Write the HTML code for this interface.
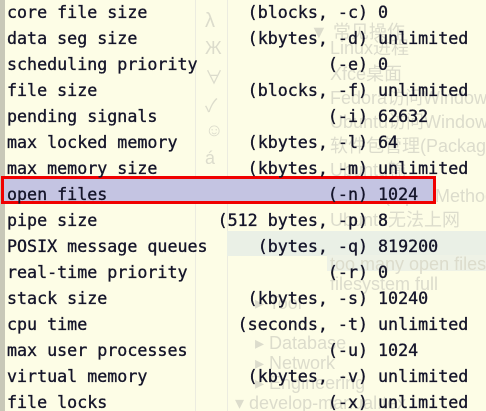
<!DOCTYPE html>
<html><head><meta charset="utf-8"><style>
html,body{margin:0;padding:0;width:486px;height:411px;overflow:hidden;}
body{background:#fdfde6;font-family:"Liberation Mono",monospace;}
#wrap{position:relative;width:486px;height:411px;overflow:hidden;}
.bg{position:absolute;color:#dcdccc;font-family:"Liberation Sans","Noto Sans CJK SC",sans-serif;font-size:18px;white-space:nowrap;}
.strip{position:absolute;left:0;top:0;width:5px;height:411px;background:#c8c8b8;}
.vl{position:absolute;top:0;width:1px;height:411px;background:#ecece0;}
.band{position:absolute;left:227px;top:231px;width:259px;height:25px;background:#eaf0e6;}
.band2{position:absolute;left:327px;top:255px;width:159px;height:16px;background:#eef2e6;}
.hl{position:absolute;left:4px;top:179px;width:429px;height:22px;background:#c4c4e2;}
.box{position:absolute;left:1px;top:176px;width:429px;height:22px;border:3px solid #f00000;}
pre{position:absolute;left:7px;top:0;margin:0;font-size:16.67px;line-height:26px;color:#15152a;-webkit-text-stroke:0.35px #15152a;}
</style></head><body><div id="wrap">
<div class="strip"></div>
<div class="vl" style="left:195px"></div>
<div class="vl" style="left:227px"></div>
<div class="band"></div><div class="band2"></div>
<div class="bg" style="left:310px;top:18px">▼ 常见操作</div>
<div class="bg" style="left:330px;top:34px">Linux进程</div>
<div class="bg" style="left:330px;top:60px">Xfce桌面</div>
<div class="bg" style="left:330px;top:84px">Fedora访问Windows共</div>
<div class="bg" style="left:330px;top:108px">Ubuntu访问Windows共</div>
<div class="bg" style="left:330px;top:132px">软件包管理(Package M</div>
<div class="bg" style="left:330px;top:156px">Ubuntu输</div>
<div class="bg" style="left:330px;top:182px">输入法(Input Method)</div>
<div class="bg" style="left:330px;top:206px">Ubuntu无法上网</div>
<div class="bg" style="left:330px;top:254px">too many open files</div>
<div class="bg" style="left:330px;top:274px">filesystem full</div>
<div class="bg" style="left:255px;top:293px">▸ Tool</div>
<div class="bg" style="left:255px;top:333px">▸ Database</div>
<div class="bg" style="left:255px;top:353px">▸ Network</div>
<div class="bg" style="left:255px;top:373px">▸ Engineering</div>
<div class="bg" style="left:235px;top:393px">▾ develop-manual.tex</div>
<div class="bg" style="left:205px;top:10px;font-size:20px">λ</div>
<div class="bg" style="left:205px;top:38px">Ж</div>
<div class="bg" style="left:205px;top:64px">∀</div>
<div class="bg" style="left:205px;top:92px">✓</div>
<div class="bg" style="left:205px;top:120px">☺</div>
<div class="bg" style="left:205px;top:148px">á</div>
<div class="hl"></div>
<div class="box"></div>
<pre>core file size          (blocks, -c) 0
data seg size           (kbytes, -d) unlimited
scheduling priority             (-e) 0
file size               (blocks, -f) unlimited
pending signals                 (-i) 62632
max locked memory       (kbytes, -l) 64
max memory size         (kbytes, -m) unlimited
open files                      (-n) 1024
pipe size            (512 bytes, -p) 8
POSIX message queues     (bytes, -q) 819200
real-time priority              (-r) 0
stack size              (kbytes, -s) 10240
cpu time               (seconds, -t) unlimited
max user processes              (-u) 1024
virtual memory          (kbytes, -v) unlimited
file locks                      (-x) unlimited</pre>
</div></body></html>
